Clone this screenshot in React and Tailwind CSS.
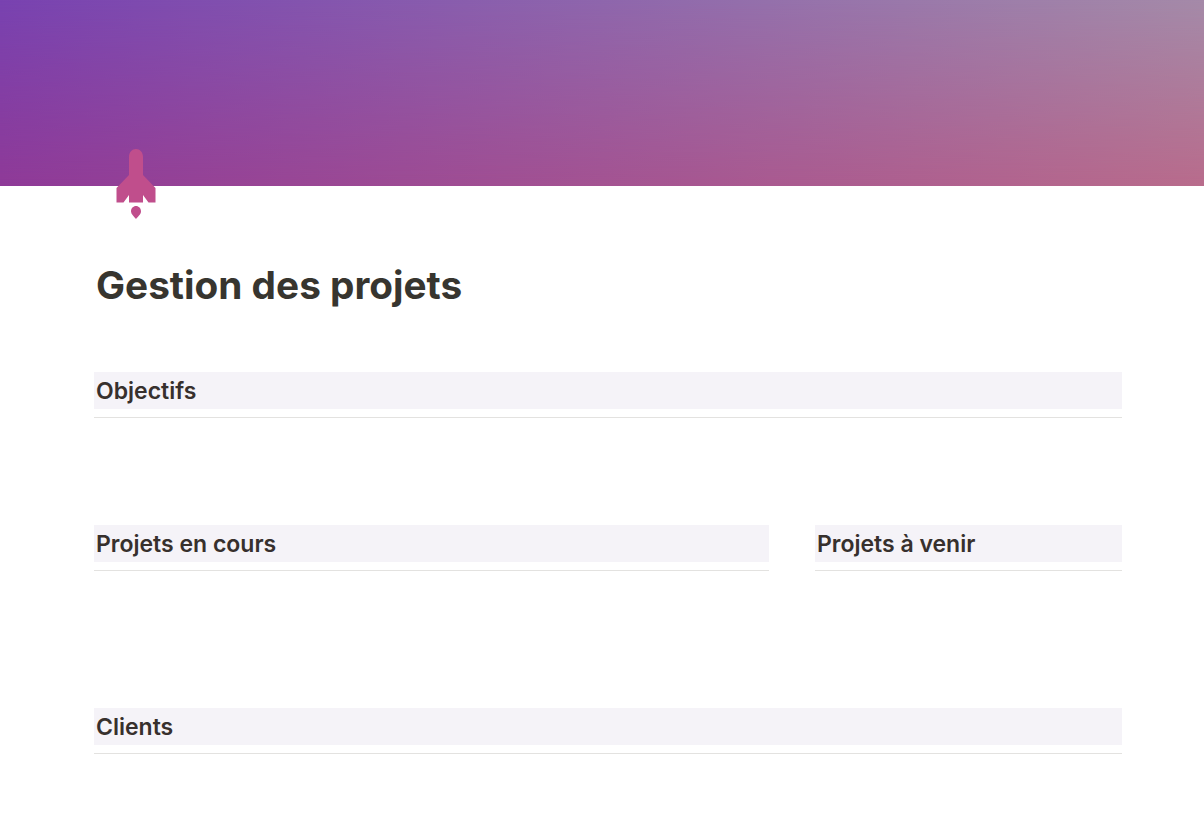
function Rocket() {
  return (
    <svg width="40" height="70" viewBox="0 0 40 70" className="block">
      <path
        fill="#c04e8c"
        d="M20 0C23.8 0 27 3.2 27 8V26L39.5 39V53.5H32.5L27 46V53.5H13V46L7.5 53.5H.5V39L13 26V8C13 3.2 16.2 0 20 0Z"
      />
      <path
        fill="#c04e8c"
        d="M20 57C22.8 57 25 59.3 25 62.5C25 65.3 22 67.5 20 70C18 67.5 15 65.3 15 62.5C15 59.3 17.2 57 20 57Z"
      />
    </svg>
  );
}

function SectionHeader({ title }) {
  return (
    <div className="border-b border-[#e3e2e0] pb-2">
      <h2 className="h-[37px] bg-[#f5f3f8] pl-[2px] text-[23px] leading-[38px] font-semibold text-[#37302d]">
        {title}
      </h2>
    </div>
  );
}

export default function App() {
  return (
    <div className="min-h-[837px] overflow-hidden bg-white font-['Inter',sans-serif]">
      <header className="relative h-[186px] bg-[linear-gradient(to_right,#8f3a98,#b96c8c)] before:absolute before:inset-0 before:bg-[linear-gradient(to_right,#7842b0,#a48aa8)] before:[mask-image:linear-gradient(to_bottom,black,transparent)] before:content-['']">
        <div className="absolute top-[149px] left-[116px]">
          <Rocket />
        </div>
      </header>
      <main className="ml-[94px] w-[1028px]">
        <h1 className="mt-[74px] pl-[2px] text-[38.75px] leading-[50px] font-bold text-[#37352f]">
          Gestion des projets
        </h1>
        <section className="mt-[62px]">
          <SectionHeader title="Objectifs" />
        </section>
        <div className="mt-[107px] flex gap-[46px]">
          <section className="w-[675px]">
            <SectionHeader title="Projets en cours" />
          </section>
          <section className="w-[307px]">
            <SectionHeader title="Projets à venir" />
          </section>
        </div>
        <section className="mt-[137px]">
          <SectionHeader title="Clients" />
        </section>
      </main>
    </div>
  );
}
